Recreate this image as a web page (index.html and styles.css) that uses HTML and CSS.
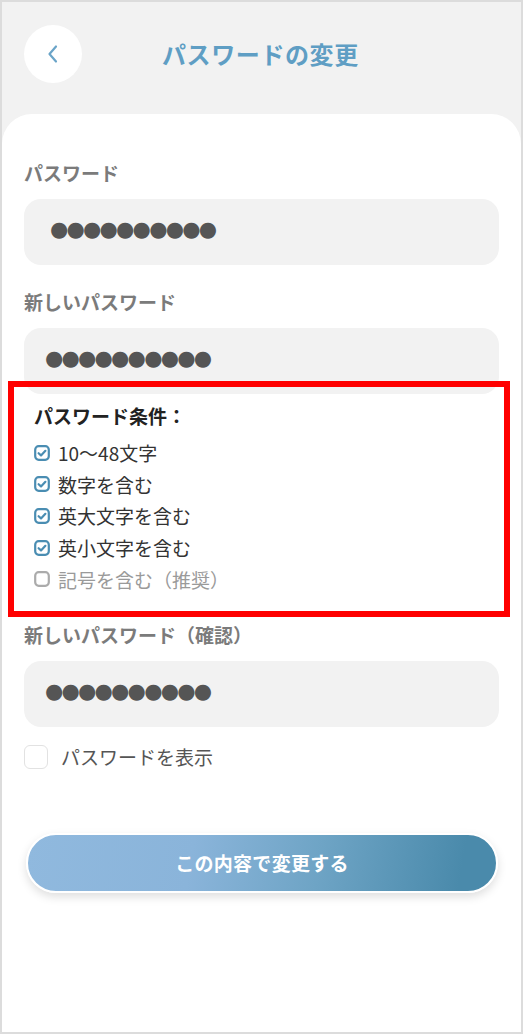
FILE: index.html
```html
<!DOCTYPE html>
<html lang="ja">
<head>
<meta charset="utf-8">
<title>パスワードの変更</title>
<link rel="stylesheet" href="styles.css">
</head>
<body>
<div class="frame">
  <header class="header">
    <button class="back" aria-label="戻る">
      <svg width="16" height="20" viewBox="0 0 16 20"><polyline points="11,2.5 4.5,10 11,17.5" fill="none" stroke="#6aa4c8" stroke-width="2.2" stroke-linecap="round" stroke-linejoin="round"/></svg>
    </button>
    <h1 class="title">パスワードの変更</h1>
  </header>
  <main class="card">
    <div class="label first">パスワード</div>
    <div class="field field-old"><span class="dots">●●●●●●●●●●</span></div>
    <div class="label">新しいパスワード</div>
    <div class="field"><span class="dots">●●●●●●●●●●</span></div>
    <section class="rules">
      <div class="rules-title">パスワード条件：</div>
      <ul class="rule-list">
        <li class="rule ok"><span class="cb"><svg width="16" height="16" viewBox="0 0 16 16"><rect x="1.2" y="1.2" width="13.6" height="13.6" rx="3.5" fill="none" stroke="#4a8db2" stroke-width="2.2"/><polyline points="4.6,8.2 7,10.4 11.4,5.8" fill="none" stroke="#4a8db2" stroke-width="2.2" stroke-linecap="round" stroke-linejoin="round"/></svg></span>10〜48文字</li>
        <li class="rule ok"><span class="cb"><svg width="16" height="16" viewBox="0 0 16 16"><rect x="1.2" y="1.2" width="13.6" height="13.6" rx="3.5" fill="none" stroke="#4a8db2" stroke-width="2.2"/><polyline points="4.6,8.2 7,10.4 11.4,5.8" fill="none" stroke="#4a8db2" stroke-width="2.2" stroke-linecap="round" stroke-linejoin="round"/></svg></span>数字を含む</li>
        <li class="rule ok"><span class="cb"><svg width="16" height="16" viewBox="0 0 16 16"><rect x="1.2" y="1.2" width="13.6" height="13.6" rx="3.5" fill="none" stroke="#4a8db2" stroke-width="2.2"/><polyline points="4.6,8.2 7,10.4 11.4,5.8" fill="none" stroke="#4a8db2" stroke-width="2.2" stroke-linecap="round" stroke-linejoin="round"/></svg></span>英大文字を含む</li>
        <li class="rule ok"><span class="cb"><svg width="16" height="16" viewBox="0 0 16 16"><rect x="1.2" y="1.2" width="13.6" height="13.6" rx="3.5" fill="none" stroke="#4a8db2" stroke-width="2.2"/><polyline points="4.6,8.2 7,10.4 11.4,5.8" fill="none" stroke="#4a8db2" stroke-width="2.2" stroke-linecap="round" stroke-linejoin="round"/></svg></span>英小文字を含む</li>
        <li class="rule off"><span class="cb"><svg width="16" height="16" viewBox="0 0 16 16"><rect x="1.2" y="1.2" width="13.6" height="13.6" rx="3.5" fill="none" stroke="#ababab" stroke-width="2.2"/></svg></span>記号を含む（推奨）</li>
      </ul>
    </section>
    <div class="label confirm">新しいパスワード（確認）</div>
    <div class="field"><span class="dots">●●●●●●●●●●</span></div>
    <label class="show"><span class="box"></span>パスワードを表示</label>
    <button class="submit">この内容で変更する</button>
  </main>
  <div class="highlight"></div>
</div>
</body>
</html>
```
FILE: styles.css
```css
* { box-sizing: border-box; }
html, body { margin: 0; padding: 0; }
body {
  font-family: "Noto Sans CJK JP", "Noto Sans", sans-serif;
  background: #ffffff;
}
.frame {
  position: relative;
  width: 523px;
  height: 1034px;
  border: 2px solid #dcdcdc;
  background: #f2f2f2;
  display: flex;
  flex-direction: column;
  overflow: hidden;
}
.header {
  display: flex;
  align-items: center;
  padding: 23px 22px 0 22px;
  height: 81px;
}
.back {
  width: 58px;
  height: 58px;
  border-radius: 50%;
  border: none;
  background: #ffffff;
  display: flex;
  align-items: center;
  justify-content: center;
  padding: 0;
  flex: none;
}
.title {
  margin: 0 0 0 80px;
  font-size: 24px;
  line-height: 34px;
  font-weight: 700;
  color: #5f9ec4;
  letter-spacing: 0.6px;
}
.card {
  flex: 1;
  margin-top: 31px;
  background: #ffffff;
  border-radius: 30px 30px 0 0;
  padding: 46px 22px 0 22px;
  display: flex;
  flex-direction: column;
}
.label {
  font-size: 19px;
  line-height: 26px;
  font-weight: 700;
  color: #7b7b7b;
  margin-top: 24px;
}
.label.first { margin-top: 0; }
.label.confirm { margin-top: 27px; }
.field {
  margin-top: 13px;
  height: 66px;
  border-radius: 17px;
  background: #f2f2f2;
  display: flex;
  align-items: center;
  padding-left: 21px;
  padding-bottom: 5px;
}
.field-old { padding-left: 26px; }
.dots {
  font-family: "DejaVu Sans", sans-serif;
  font-size: 21px;
  color: #555555;
  letter-spacing: -1.8px;
  line-height: 1;
}
.rules { margin-top: 8px; padding-left: 10px; }
.rules-title {
  font-size: 19px;
  line-height: 28px;
  font-weight: 700;
  color: #222222;
}
.rule-list {
  list-style: none;
  margin: 7px 0 0 0;
  padding: 0;
}
.rule {
  display: flex;
  align-items: center;
  height: 31.6px;
  font-size: 19px;
  color: #333333;
}
.rule.off { color: #9a9a9a; }
.cb {
  width: 16px;
  height: 16px;
  margin-right: 8px;
  display: flex;
  flex: none;
}
.show {
  margin-top: 18px;
  display: flex;
  align-items: center;
  height: 24px;
  font-size: 19px;
  color: #555555;
}
.box {
  width: 24px;
  height: 24px;
  border: 1.5px solid #e2e2e2;
  border-radius: 6px;
  margin-right: 13px;
  background: #ffffff;
}
.submit {
  margin: 64px 1px 0 2px;
  height: 60px;
  border: 2px solid #ffffff;
  border-radius: 30px;
  background: linear-gradient(100deg, #90b9de 0%, #8ab4da 35%, #6ea4c5 62%, #4a8aab 92%);
  box-shadow: 0 4px 10px rgba(0, 0, 0, 0.13);
  color: #ffffff;
  font-family: "Noto Sans CJK JP", sans-serif;
  font-size: 19px;
  font-weight: 700;
  letter-spacing: 0.3px;
}
.highlight {
  position: absolute;
  left: 6px;
  top: 379px;
  width: 502px;
  height: 236px;
  border: 6px solid #ff0000;
  pointer-events: none;
}
```
